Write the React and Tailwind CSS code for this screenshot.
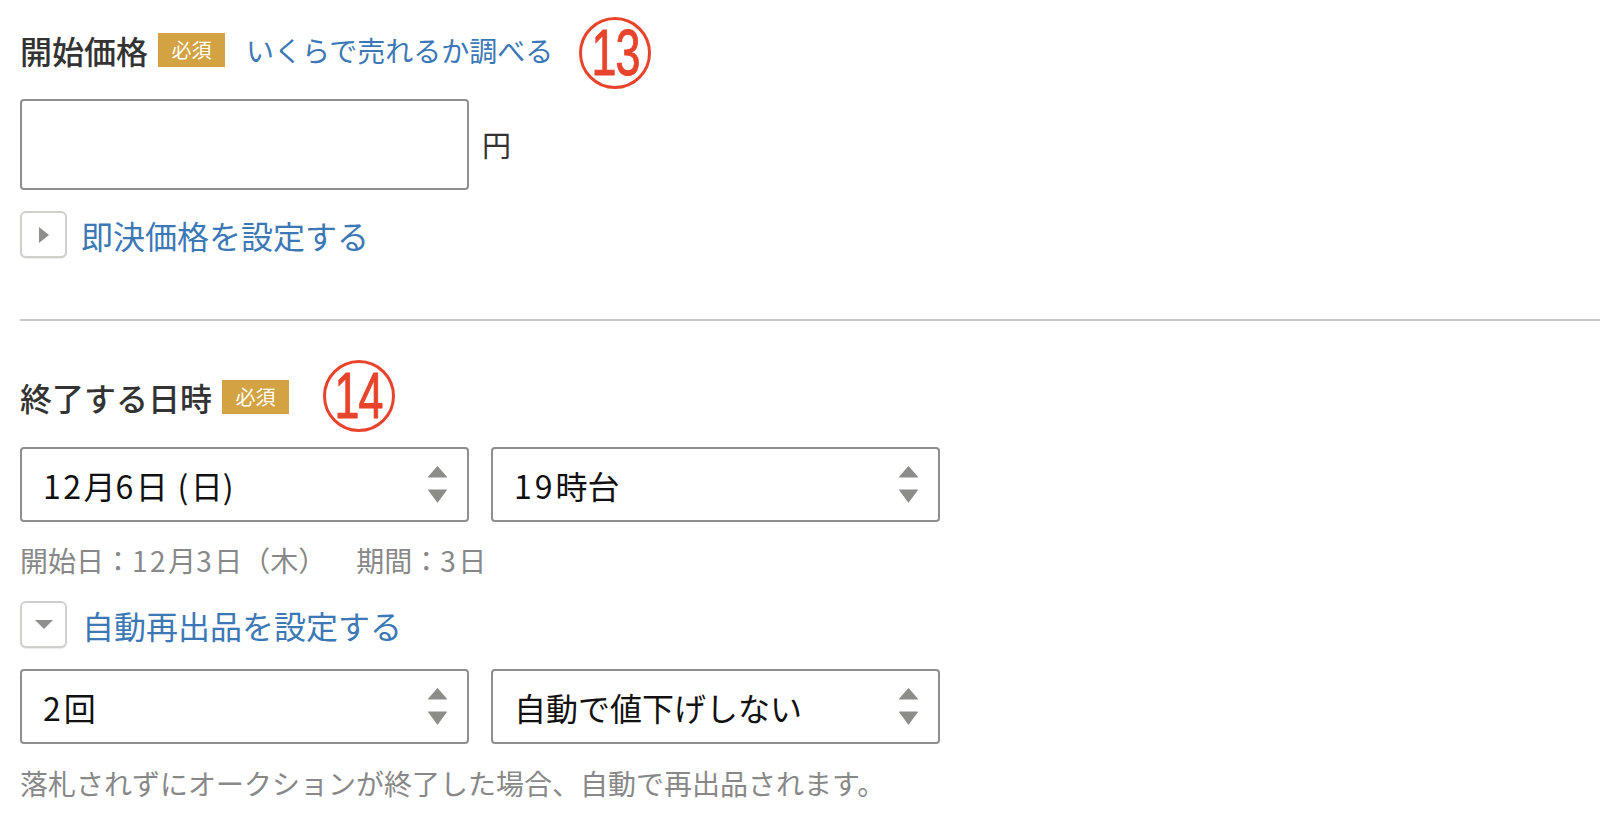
import React from "react";

const FONT = "font-['Noto_Sans_CJK_JP','Noto_Sans',sans-serif]";

function Badge() {
  return (
    <span className="inline-flex h-[34px] w-[67px] items-center justify-center bg-[#d3a343] text-[20px] leading-none text-white">
      必須
    </span>
  );
}

function CircleNum({ n }) {
  return (
    <div className="flex h-[72px] w-[72px] items-center justify-center rounded-full border-[3px] border-[#e8432b]">
      <span className="inline-block scale-x-[0.7] font-['Liberation_Sans',sans-serif] text-[64px] leading-none tracking-[-1px] text-[#e8432b] [-webkit-text-stroke:1px_#e8432b]">
        {n}
      </span>
    </div>
  );
}

function Arrows() {
  return (
    <svg width="19" height="37" viewBox="0 0 19 37" className="shrink-0">
      <path d="M9.5 0.8 L18.3 11 L0.7 11 Z" fill="#8c8c88" strokeLinejoin="round" stroke="#8c8c88" strokeWidth="1.2" />
      <path d="M0.7 24 L18.3 24 L9.5 36 Z" fill="#8c8c88" strokeLinejoin="round" stroke="#8c8c88" strokeWidth="1.2" />
    </svg>
  );
}

function D({ children, t = "tracking-[2.5px]" }) {
  return <span className={t}>{children}</span>;
}

function Select({ children }) {
  return (
    <div className="flex h-[75px] w-[449px] items-center justify-between rounded-[4px] border-2 border-[#8e8e8e] pl-[21px] pr-[20px]">
      <span className="text-[32px] leading-none text-[#111]">{children}</span>
      <Arrows />
    </div>
  );
}

function ToggleBox({ dir }) {
  return (
    <div className="flex h-[47px] w-[47px] shrink-0 items-center justify-center rounded-[6px] border-2 border-[#cfcfcb] bg-white shadow-[0_1px_1px_rgba(0,0,0,0.08)]">
      {dir === "right" ? (
        <svg width="10" height="16" viewBox="0 0 10 16">
          <path d="M0 0 L10 8 L0 16 Z" fill="#8f8f8c" />
        </svg>
      ) : (
        <svg width="18" height="9" viewBox="0 0 18 9">
          <path d="M0 0 L18 0 L9 9 Z" fill="#8f8f8c" />
        </svg>
      )}
    </div>
  );
}

export default function App() {
  return (
    <div className={`${FONT} min-h-[833px] w-[1600px] bg-white pl-[20px] pt-[10px] text-[#333]`}>
      {/* 開始価格 */}
      <div className="flex h-[79px] items-center">
        <span className="text-[32px] font-medium leading-none text-[#333]">開始価格</span>
        <span className="ml-[10px]"><Badge /></span>
        <span className="ml-[21px] text-[28px] leading-none text-[#3c78b6]">いくらで売れるか調べる</span>
        <span className="ml-[26px] mt-[7px]"><CircleNum n="13" /></span>
      </div>

      <div className="mt-[10px] flex items-center">
        <div className="h-[91px] w-[449px] rounded-[4px] border-2 border-[#8e8e8e]" />
        <span className="ml-[13px] text-[29px] leading-none text-[#333]">円</span>
      </div>

      <div className="mt-[21px] flex items-center">
        <ToggleBox dir="right" />
        <span className="ml-[14px] text-[32px] leading-none text-[#3c78b6]">即決価格を設定する</span>
      </div>

      <div className="mt-[61px] h-[2px] bg-[#c9c9c9]" />

      {/* 終了する日時 */}
      <div className="mt-[39px] flex h-[73px] items-center">
        <span className="text-[32px] font-medium leading-none text-[#333]">終了する日時</span>
        <span className="ml-[10px]"><Badge /></span>
        <span className="ml-[34px] -mt-[2px]"><CircleNum n="14" /></span>
      </div>

      <div className="mt-[14px] flex gap-[22px]">
        <Select><D t="tracking-[2.5px]">12</D>月<D t="tracking-[2.5px]">6</D>日<D t="tracking-[2.5px]"> (</D>日<D t="tracking-[2.5px]">)</D></Select>
        <Select><D t="tracking-[3px]">19</D>時台</Select>
      </div>

      <div className="mt-[18px] flex h-[40px] items-center text-[28px] leading-none text-[#888]">
        <span>開始日：<D>12</D>月<D>3</D>日（木）</span>
        <span className="ml-[30px]">期間：<D>3</D>日</span>
      </div>

      <div className="mt-[21px] flex items-center">
        <ToggleBox dir="down" />
        <span className="ml-[15px] text-[32px] leading-none text-[#3c78b6]">自動再出品を設定する</span>
      </div>

      <div className="mt-[21px] flex gap-[22px]">
        <Select><D t="tracking-[3px]">2</D>回</Select>
        <Select>自動で値下げしない</Select>
      </div>

      <div className="mt-[19px] flex h-[40px] items-center text-[28px] leading-none text-[#888]">
        落札されずにオークションが終了した場合、自動で再出品されます。
      </div>
    </div>
  );
}
